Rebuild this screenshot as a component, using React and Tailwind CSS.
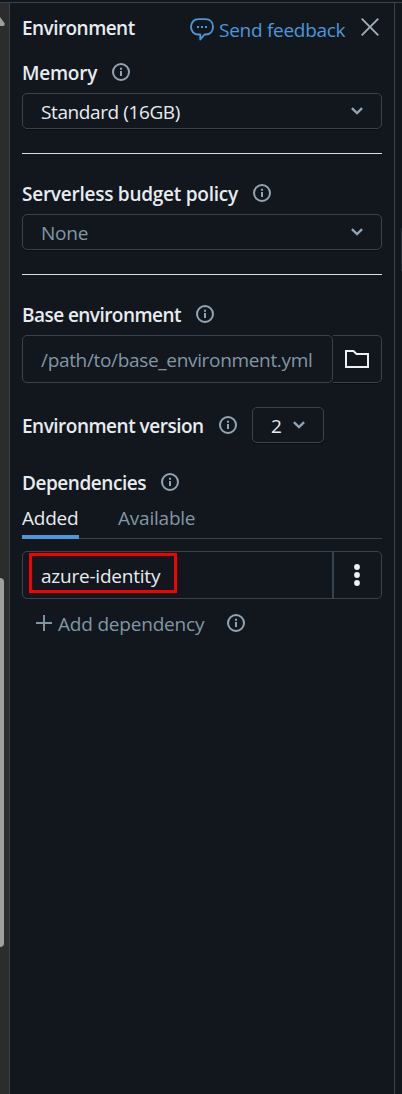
import React from "react";

function InfoIcon() {
  return (
    <svg className="block h-[18px] w-[18px] shrink-0 text-[#92a4b3]" viewBox="0 0 18 18" fill="none">
      <circle cx="9" cy="9" r="8" stroke="currentColor" strokeWidth="2" />
      <path d="M9 7.9v5.2" stroke="currentColor" strokeWidth="2" />
      <path d="M9 4.7v2" stroke="currentColor" strokeWidth="2" />
    </svg>
  );
}

function Chevron() {
  return (
    <svg className="block h-2 w-3 shrink-0" viewBox="0 0 12 8" fill="none">
      <path d="M.9 1.1 6 6.1l5.1-5" stroke="#92a4b3" strokeWidth="2.3" />
    </svg>
  );
}

function Label({ children, width }) {
  return (
    <div className="flex h-6 items-center">
      <span className={"shrink-0 font-semibold " + width}>{children}</span>
      <span className="mb-[3px]"><InfoIcon /></span>
    </div>
  );
}

function Select({ children, muted }) {
  return (
    <button className="flex h-9 w-full items-center justify-between rounded-[5px] border border-[#37444f] pr-[18px] pl-[18px] shadow-[0_1px_0_#090d12]">
      <span className={muted ? "pt-[2px] tracking-[-0.2px] text-[#8396a5]" : "pt-[2px] tracking-[-0.4px]"}>{children}</span>
      <Chevron />
    </button>
  );
}

export default function App() {
  return (
    <div className="flex h-[1094px] w-[402px] flex-col overflow-hidden bg-[#11171d] font-['Open_Sans','Noto_Sans',sans-serif] text-[19px] leading-6 font-[430] whitespace-nowrap text-[#e8ecf0]">
      <div className="h-[3px] shrink-0 border-b border-[#37444f]" />
      <div className="flex min-h-0 flex-1">
        <div className="flex w-[9px] shrink-0 flex-col bg-[#2c2c2c]">
          <svg className="mt-[14px] block h-[9px] w-[5px]" viewBox="0 0 5 9">
            <path d="M0 0 4.7 6.5Q5 9 3 9H0Z" fill="#9f9f9f" />
          </svg>
          <div className="mt-[552px] h-[369px] w-1 rounded-r-[4px] bg-[#9f9f9f]" />
        </div>
        <main className="flex w-[386px] shrink-0 flex-col border-x border-[#37444f] bg-[#11171d] pr-3 pl-3">
          <header className="mt-[13px] flex h-6 items-center">
            <h1 className="w-[168px] shrink-0 font-semibold tracking-[-0.55px]">Environment</h1>
            <a className="flex w-[171px] shrink-0 items-center text-[#4a97dc]">
              <svg className="mt-1 block h-6 w-6 shrink-0" viewBox="0 0 24 24" fill="none">
                <path d="M8.5 1.1h7c4.6 0 7.5 3.3 7.5 7.7s-2.9 7.7-7.5 7.7h-1L10.3 21.5v-5H8.5C3.9 16.5 1 13.2 1 8.8s2.9-7.7 7.5-7.7Z" stroke="currentColor" strokeWidth="1.9" strokeLinejoin="round" />
                <path d="M7 9h2M11 9h2M15 9h2" stroke="currentColor" strokeWidth="2" />
              </svg>
              <span className="mt-[3px] ml-[5px] tracking-[-0.28px]">Send feedback</span>
            </a>
            <svg className="mb-[2px] block h-[18px] w-[18px] shrink-0" viewBox="0 0 18 18">
              <path d="m.7.7 16.6 16.6M17.3.7.7 17.3" stroke="#a0acb6" strokeWidth="1.9" />
            </svg>
          </header>
          <section className="mt-[21px] flex flex-col">
            <Label width="w-[90px] tracking-[-0.25px]">Memory</Label>
            <div className="mt-2"><Select>Standard (16GB)</Select></div>
          </section>
          <hr className="mt-6 border-[#d8dfe5]" />
          <section className="mt-7 flex flex-col">
            <Label width="w-[231px] tracking-[-0.25px]">Serverless budget policy</Label>
            <div className="mt-2"><Select muted>None</Select></div>
          </section>
          <hr className="mt-6 border-[#d8dfe5]" />
          <section className="mt-7 flex flex-col">
            <Label width="w-[174px] tracking-[-0.55px]">Base environment</Label>
            <div className="mt-2 flex h-12">
              <div className="flex w-[311px] items-center rounded-[5px] border border-[#37444f] pt-[2px] pl-[18px] tracking-[-0.33px] text-[#8396a5]">/path/to/base_environment.yml</div>
              <button className="flex flex-1 items-center justify-center rounded-r-[5px] border-y border-r border-[#37444f] shadow-[0_1px_0_#090d12]">
                <svg className="block h-[18px] w-6" viewBox="0 0 24 18">
                  <path d="M1 1h7.5l3 3H23v13H1Z" fill="none" stroke="#eef0f3" strokeWidth="2" />
                </svg>
              </button>
            </div>
          </section>
          <div className="mt-6 flex h-9 items-center">
            <div className="pt-[2px]"><Label width="w-[197px] tracking-[-0.5px]">Environment version</Label></div>
            <button className="ml-[15px] flex h-9 w-[72px] items-center justify-between rounded-[5px] border border-[#37444f] pr-[18px] pl-[18px] shadow-[0_1px_0_#090d12]">
              <span className="pt-[2px]">2</span>
              <Chevron />
            </button>
          </div>
          <section className="mt-[28px] flex flex-col">
            <Label width="w-[139px] tracking-[-0.45px]">Dependencies</Label>
            <div className="mt-[11px] flex h-[33px] border-b border-[#37444f]">
              <button className="h-[33px] w-[57px] border-b-4 border-[#4a97dc] pb-[5px] text-left leading-6 tracking-[-0.25px]">Added</button>
              <button className="ml-[39px] h-6 tracking-[-0.22px] text-[#8396a5]">Available</button>
            </div>
            <div className="mt-3 flex h-12 rounded-[5px] border border-[#37444f]">
              <div className="flex w-[311px] items-center border-r-2 border-[#37444f] pl-[6px]">
                <div className="mb-[5px] flex h-10 w-[148px] items-center border-[3px] border-[#f80000] pt-[6px] pl-[9px] tracking-[-0.22px]">azure-identity</div>
              </div>
              <button className="flex flex-1 items-center justify-center pr-[2px]">
                <svg className="block h-[22px] w-[6px]" viewBox="0 0 6 22" fill="#eef0f3">
                  <circle cx="3" cy="3" r="2.9" />
                  <circle cx="3" cy="11" r="2.9" />
                  <circle cx="3" cy="19" r="2.9" />
                </svg>
              </button>
            </div>
          </section>
          <div className="mt-3 flex h-6 items-center pl-[14px] text-[#8396a5]">
            <svg className="block h-4 w-4 shrink-0" viewBox="0 0 16 16">
              <path d="M0 8h16M8 0v16" stroke="currentColor" strokeWidth="1.9" />
            </svg>
            <span className="mt-[2px] ml-[6px] w-[169px] shrink-0 tracking-[-0.2px]">Add dependency</span>
            <InfoIcon />
          </div>
        </main>
        <aside className="w-[7px] shrink-0 pt-[225px] pl-[6px]">
          <div className="h-[43px] w-px bg-[#252e36]" />
        </aside>
      </div>
    </div>
  );
}
